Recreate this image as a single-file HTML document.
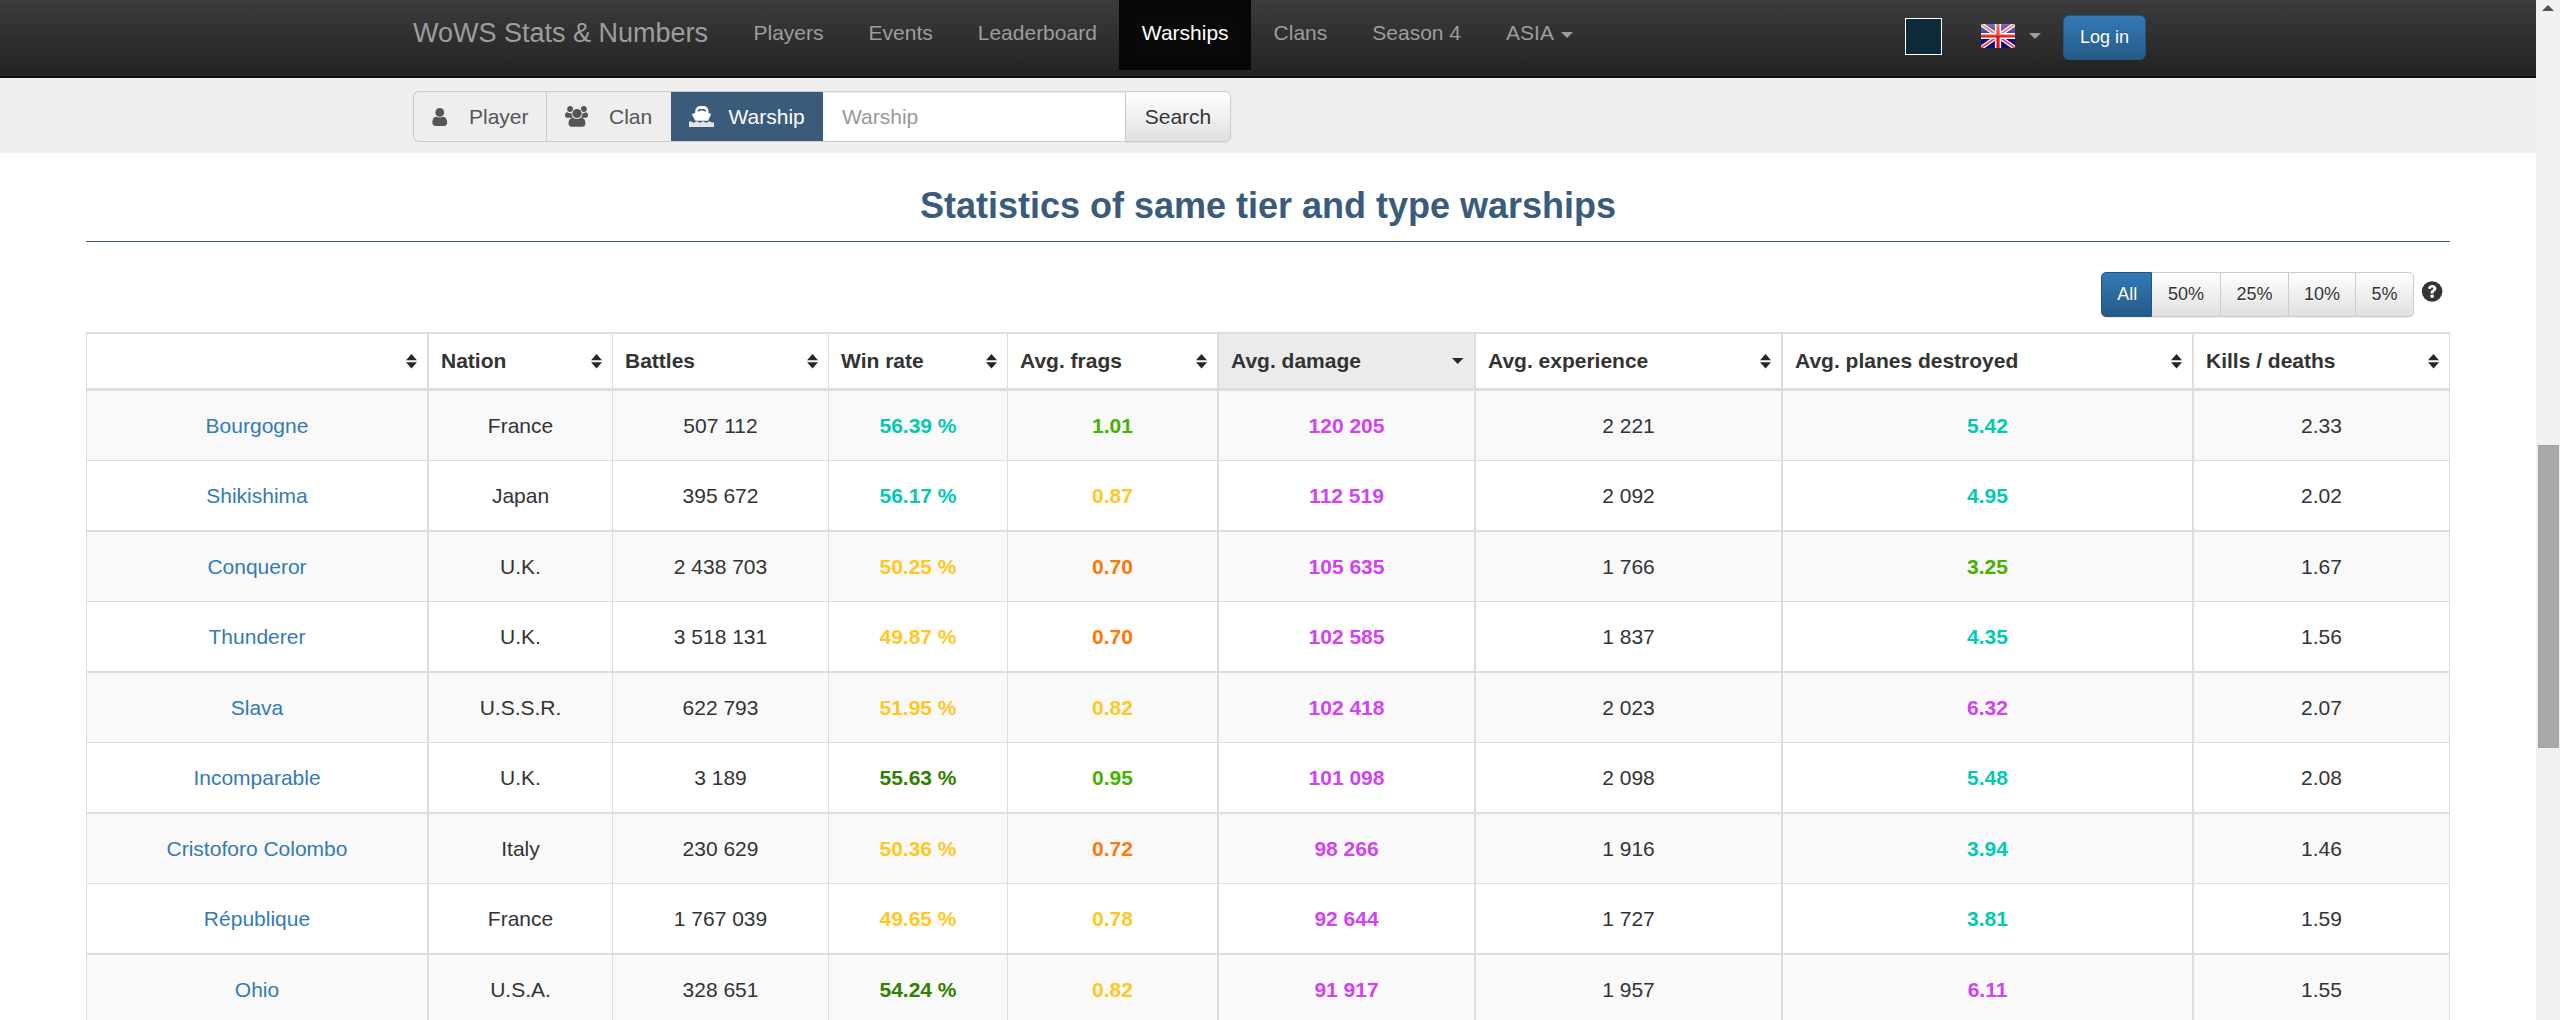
<!DOCTYPE html>
<html>
<head>
<meta charset="utf-8">
<title>WoWS Stats &amp; Numbers</title>
<style>
*{box-sizing:border-box;margin:0;padding:0}
html,body{width:2560px;height:1020px;overflow:hidden;background:#fff}
body{font-family:"Liberation Sans",sans-serif;font-size:21px;color:#333;position:relative}
a{color:#337ab7;text-decoration:none}
/* scrollbar */
.sb{position:absolute;left:2536px;top:0;width:24px;height:1020px;background:#f1f1f1}
.sb .thumb{position:absolute;left:2px;top:445px;width:21px;height:303px;background:#a8a8a8;border:1px solid #a2a2a2}
.sb .up{position:absolute;left:6px;top:5px;width:0;height:0;border-left:6px solid transparent;border-right:6px solid transparent;border-bottom:6px solid #505050}
/* navbar */
.nav{position:absolute;left:0;top:0;width:2536px;height:78px;background:linear-gradient(#3c3c3c 0,#222 76px,#121212 76px,#121212 77px);border-bottom:1px solid #080808}
.brand{position:absolute;left:413px;top:0;height:70px;line-height:66px;font-size:27px;color:#9d9d9d;white-space:nowrap}
.links{position:absolute;left:731px;top:0;height:70px;display:flex}
.links div{height:70px;line-height:66px;padding:0 22.5px;color:#9d9d9d;font-size:21px;white-space:nowrap}
.links div.act{background:#080808;color:#fff;box-shadow:inset 0 4px 12px rgba(0,0,0,.25)}
.caret{display:inline-block;width:0;height:0;border-left:6px solid transparent;border-right:6px solid transparent;border-top:6px solid #9d9d9d;vertical-align:middle;margin-left:7px;position:relative;top:.5px}
.swatch{position:absolute;left:1905px;top:18px;width:37px;height:37px;background:#0d2a38;border:1.5px solid #fff}
.flag{position:absolute;left:1981px;top:24px;width:34px;height:24px}
.caret2{position:absolute;left:2029px;top:33px;width:0;height:0;border-left:6px solid transparent;border-right:6px solid transparent;border-top:6px solid #9d9d9d}
.login{position:absolute;left:2063px;top:15px;width:83px;height:45px;border-radius:6px;background:linear-gradient(#337ab7 0,#265a88 100%);border:1.5px solid #245580;color:#fff;font-size:18px;line-height:42px;text-align:center;text-shadow:0 -1px 0 rgba(0,0,0,.2)}
/* search strip */
.strip{position:absolute;left:0;top:78px;width:2536px;height:75px;background:#f0efed}
.sg{position:absolute;left:413px;top:13px;height:51px;display:flex}
.sg .b{height:51px;border:1.5px solid #ccc;background:#eee;color:#555;font-size:21px;line-height:47px;white-space:nowrap;display:flex;align-items:center}
.sg .b svg{display:block}
.sg .b1{width:133px;border-radius:6px 0 0 6px;border-right:none}
.sg .b2{width:125px;border-right:none}
.sg .b3{width:152px;background:#3a5b7a;border-color:#ccc;border-width:1.5px 0;color:#fff}
.sg .inp{width:302px;height:51px;background:#fff;border-top:1.5px solid #ccc;border-bottom:1.5px solid #ccc;color:#999;font-size:21px;line-height:49px;padding-left:19px;box-shadow:inset 0 1px 1px rgba(0,0,0,.075)}
.sg .srch{width:106px;height:51px;border:1.5px solid #ccc;border-radius:0 6px 6px 0;background:linear-gradient(#fff 0,#e0e0e0 100%);color:#333;font-size:21px;line-height:49px;text-align:center;text-shadow:0 1px 0 #fff;box-shadow:inset 0 1px 0 rgba(255,255,255,.15),0 1px 1px rgba(0,0,0,.075)}
/* heading */
h3{position:absolute;left:86px;top:178px;width:2364px;height:64px;text-align:center;font-size:36px;font-weight:bold;color:#3a5b7c;line-height:55px;border-bottom:1.5px solid #3a5b7c;white-space:nowrap}
/* filter buttons */
.fg{position:absolute;left:2101px;top:272px;height:45px;display:flex;border-radius:5px;box-shadow:0 1px 1px rgba(0,0,0,.075)}
.fg div{height:45px;font-size:18px;line-height:42px;text-align:center;color:#333;border:1.5px solid #ccc;border-left:none;background:linear-gradient(#fff 0,#e0e0e0 100%);text-shadow:0 1px 0 #fff}
.fg div.on{background:linear-gradient(#337ab7 0,#265a88 100%);border:1.5px solid #245580;color:#fff;border-radius:5px 0 0 5px;text-shadow:0 -1px 0 rgba(0,0,0,.2)}
.fg div:last-child{border-radius:0 5px 5px 0}
.help{position:absolute;left:2421px;top:281px;width:22px;height:21px}
/* table */
.tbl{position:absolute;left:86px;top:332px;width:2364px;border-left:1px solid #ddd;border-top:2px solid #ddd}
.tr{display:flex;width:2363px}
.c{flex:none;border-right:1px solid #ddd;text-align:center;white-space:nowrap;overflow:hidden}
.c1{width:342px;border-right-width:2px}
.c2{width:184px}
.c3{width:216px}
.c4{width:179px}
.c5{width:211px;border-right-width:2px}
.c6{width:257px;border-right-width:2px}
.c7{width:307px;border-right-width:2px}
.c8{width:411px;border-right-width:2px}
.c9{width:256px}
.th .c{height:57px;border-bottom:3px solid #ddd;text-align:left;font-weight:bold;line-height:54px;padding-left:12px;position:relative;color:#333}
.th .sorted{background:#ebebeb}
.si{position:absolute;right:10px;top:20px;fill:#23282c;height:14.5px}
.si.sd{top:24px;right:10.5px;height:6px;width:11.5px}
.tr.b1 .c{height:70px;border-bottom:1px solid #ddd;line-height:69px}
.tr.b2 .c{height:71px;border-bottom:2px solid #ddd;line-height:69px}
.odd .c{background:#f9f9f9}
.kt{color:#02c9b3}.kg{color:#44b300}.kd{color:#318000}.ky{color:#ffc71f}.ko{color:#fe7903}.kp{color:#d042f3}
</style>
</head>
<body>
<div class="nav">
  <div class="brand">WoWS Stats &amp; Numbers</div>
  <div class="links">
    <div>Players</div><div>Events</div><div>Leaderboard</div><div class="act">Warships</div><div>Clans</div><div>Season 4</div><div>ASIA<span class="caret"></span></div>
  </div>
  <div class="swatch"></div>
  <svg class="flag" viewBox="0 0 34 24">
    <defs><filter id="fb" x="0" y="0" width="1" height="1"><feGaussianBlur stdDeviation="0.55"/></filter>
    <linearGradient id="gl" x1="0" y1="0" x2="0" y2="1"><stop offset="0" stop-color="#fff" stop-opacity=".42"/><stop offset=".5" stop-color="#fff" stop-opacity=".18"/><stop offset=".52" stop-color="#fff" stop-opacity="0"/><stop offset="1" stop-color="#fff" stop-opacity="0"/></linearGradient>
    <clipPath id="fc"><rect width="34" height="24"/></clipPath></defs>
    <g clip-path="url(#fc)"><g filter="url(#fb)">
    <rect x="-2" y="-2" width="38" height="28" fill="#0c0c7e"/>
    <path d="M0 0 L34 24 M34 0 L0 24" stroke="#fff" stroke-width="4"/>
    <path d="M0 0 L34 24 M34 0 L0 24" stroke="#ee3a44" stroke-width="1.7"/>
    <path d="M17 -2 V26 M-2 12 H36" stroke="#fff" stroke-width="6.2"/>
    <path d="M17 -2 V26 M-2 12 H36" stroke="#e01212" stroke-width="3.2"/>
    </g><rect width="34" height="24" fill="url(#gl)"/></g>
  </svg>
  <div class="caret2"></div>
  <div class="login">Log in</div>
</div>
<div class="strip">
  <div class="sg">
    <div class="b b1"><svg width="16" height="18" viewBox="0 0 16 18" style="margin-left:18.3px;margin-right:20.7px;position:relative;top:0.6px"><path d="M.3 14.5 C.3 11 2 9 4 8.7 H11.4 C13.5 9 15.2 11 15.2 14.5 C15.2 16.8 13.8 18 12 18 H3.5 C1.7 18 .3 16.8 .3 14.5Z" fill="#555"/><circle cx="7.75" cy="4.4" r="5.2" fill="#eee"/><circle cx="7.75" cy="4.4" r="4.4" fill="#555"/></svg>Player</div>
    <div class="b b2"><svg width="23" height="21" viewBox="0 0 23 21" style="margin-left:17.8px;margin-right:21.2px;position:relative;top:-0.5px"><g fill="#555"><circle cx="5.1" cy="2.95" r="3"/><circle cx="18.8" cy="2.95" r="3"/><path d="M0 9.6 C0 7.4 .9 6.3 2.3 6.3 C3.1 7 4.1 7.3 5.1 7.3 C6 7.3 6.8 7.1 7.6 6.6 L8.4 11.7 H2.2 C.9 11.7 0 11 0 9.6Z"/><path d="M23.9 9.6 C23.9 7.4 23 6.3 21.6 6.3 C20.8 7 19.8 7.3 18.8 7.3 C17.9 7.3 17.1 7.1 16.3 6.6 L15.5 11.7 H21.7 C23 11.7 23.9 11 23.9 9.6Z" transform="translate(-.9 0)"/><path d="M3.5 17.6 C3.5 14 5 12.3 7.2 12.1 H17 C19.2 12.3 20.4 14 20.4 17.6 C20.4 19.6 19.1 20.7 17.3 20.7 H6.6 C4.8 20.7 3.5 19.6 3.5 17.6Z"/></g><circle cx="12" cy="7.5" r="5.5" fill="#eee"/><circle cx="12" cy="7.5" r="4.6" fill="#555"/></svg>Clan</div>
    <div class="b b3"><svg width="25" height="21" viewBox="0 0 25 21" style="margin-left:18px;margin-right:14.5px"><g fill="#fff"><path fill-rule="evenodd" d="M10.2 0 H15.6 C17.8 .6 19.3 2.4 19.5 4.9 V6.9 L21.5 7.8 C21.9 8 22 8.4 21.8 8.9 L19.1 14.7 H6.25 L3.2 8.9 C3 8.4 3.1 8 3.5 7.8 L6.25 6.9 V4.9 C6.4 2.4 8 .6 10.2 0 Z M8.75 5.7 L12.8 4.3 L16.9 5.7 V4.6 C16.6 3.4 15.4 3 12.8 3 C10.2 3 9 3.4 8.75 4.6 Z"/><path opacity=".85" d="M0 15.9 q1.56 -1.5 3.125 0 t3.125 0 t3.125 0 t3.125 0 t3.125 0 t3.125 0 t3.125 0 t3.125 0 V21 H0 Z"/></g></svg>Warship</div>
    <div class="inp">Warship</div>
    <div class="srch">Search</div>
  </div>
</div>
<h3>Statistics of same tier and type warships</h3>
<div class="fg">
  <div class="on" style="width:51px;padding-left:1.5px">All</div><div style="width:69px">50%</div><div style="width:68px">25%</div><div style="width:67px">10%</div><div style="width:58px">5%</div>
</div>
<svg class="help" viewBox="0 0 22 21"><circle cx="11.1" cy="10.5" r="10.3" fill="#333"/><path transform="translate(0.6 0)" d="M6.4 7.6 C6.6 5.2 8.4 4 10.6 4 C13 4 14.8 5.4 14.8 7.5 C14.8 9.1 13.8 9.9 12.9 10.5 C12.2 11 12 11.3 12 12.1 V12.5 H9 V11.7 C9 10.3 9.7 9.6 10.5 9 C11.3 8.5 11.7 8.2 11.7 7.6 C11.7 7 11.2 6.6 10.5 6.6 C9.8 6.6 9.4 7.1 9.3 7.9 Z M8.9 13.7 H12.1 V16.8 H8.9 Z" fill="#fff"/></svg>
<div class="tbl">
<div class="tr th">
<div class="c c1"><span></span><svg class="si" width="11" height="14.5" viewBox="0 0 11 15" preserveAspectRatio="none"><path d="M5.5 0 L11 6.4 H0 Z M0 8.6 H11 L5.5 15 Z"/></svg></div>
<div class="c c2"><span>Nation</span><svg class="si" width="11" height="14.5" viewBox="0 0 11 15" preserveAspectRatio="none"><path d="M5.5 0 L11 6.4 H0 Z M0 8.6 H11 L5.5 15 Z"/></svg></div>
<div class="c c3"><span>Battles</span><svg class="si" width="11" height="14.5" viewBox="0 0 11 15" preserveAspectRatio="none"><path d="M5.5 0 L11 6.4 H0 Z M0 8.6 H11 L5.5 15 Z"/></svg></div>
<div class="c c4"><span>Win rate</span><svg class="si" width="11" height="14.5" viewBox="0 0 11 15" preserveAspectRatio="none"><path d="M5.5 0 L11 6.4 H0 Z M0 8.6 H11 L5.5 15 Z"/></svg></div>
<div class="c c5"><span>Avg. frags</span><svg class="si" width="11" height="14.5" viewBox="0 0 11 15" preserveAspectRatio="none"><path d="M5.5 0 L11 6.4 H0 Z M0 8.6 H11 L5.5 15 Z"/></svg></div>
<div class="c c6 sorted"><span>Avg. damage</span><svg class="si sd" width="11" height="7" viewBox="0 0 13 7" preserveAspectRatio="none"><path d="M0 0 H13 L6.5 7 Z"/></svg></div>
<div class="c c7"><span>Avg. experience</span><svg class="si" width="11" height="14.5" viewBox="0 0 11 15" preserveAspectRatio="none"><path d="M5.5 0 L11 6.4 H0 Z M0 8.6 H11 L5.5 15 Z"/></svg></div>
<div class="c c8"><span>Avg. planes destroyed</span><svg class="si" width="11" height="14.5" viewBox="0 0 11 15" preserveAspectRatio="none"><path d="M5.5 0 L11 6.4 H0 Z M0 8.6 H11 L5.5 15 Z"/></svg></div>
<div class="c c9"><span>Kills / deaths</span><svg class="si" width="11" height="14.5" viewBox="0 0 11 15" preserveAspectRatio="none"><path d="M5.5 0 L11 6.4 H0 Z M0 8.6 H11 L5.5 15 Z"/></svg></div>
</div>
<div class="tr r1 odd b1">
<div class="c c1"><a>Bourgogne</a></div>
<div class="c c2">France</div>
<div class="c c3">507 112</div>
<div class="c c4"><b class="kt">56.39 %</b></div>
<div class="c c5"><b class="kg">1.01</b></div>
<div class="c c6"><b class="kp">120 205</b></div>
<div class="c c7">2 221</div>
<div class="c c8"><b class="kt">5.42</b></div>
<div class="c c9">2.33</div>
</div>
<div class="tr r2 even b2">
<div class="c c1"><a>Shikishima</a></div>
<div class="c c2">Japan</div>
<div class="c c3">395 672</div>
<div class="c c4"><b class="kt">56.17 %</b></div>
<div class="c c5"><b class="ky">0.87</b></div>
<div class="c c6"><b class="kp">112 519</b></div>
<div class="c c7">2 092</div>
<div class="c c8"><b class="kt">4.95</b></div>
<div class="c c9">2.02</div>
</div>
<div class="tr r3 odd b1">
<div class="c c1"><a>Conqueror</a></div>
<div class="c c2">U.K.</div>
<div class="c c3">2 438 703</div>
<div class="c c4"><b class="ky">50.25 %</b></div>
<div class="c c5"><b class="ko">0.70</b></div>
<div class="c c6"><b class="kp">105 635</b></div>
<div class="c c7">1 766</div>
<div class="c c8"><b class="kg">3.25</b></div>
<div class="c c9">1.67</div>
</div>
<div class="tr r4 even b2">
<div class="c c1"><a>Thunderer</a></div>
<div class="c c2">U.K.</div>
<div class="c c3">3 518 131</div>
<div class="c c4"><b class="ky">49.87 %</b></div>
<div class="c c5"><b class="ko">0.70</b></div>
<div class="c c6"><b class="kp">102 585</b></div>
<div class="c c7">1 837</div>
<div class="c c8"><b class="kt">4.35</b></div>
<div class="c c9">1.56</div>
</div>
<div class="tr r5 odd b1">
<div class="c c1"><a>Slava</a></div>
<div class="c c2">U.S.S.R.</div>
<div class="c c3">622 793</div>
<div class="c c4"><b class="ky">51.95 %</b></div>
<div class="c c5"><b class="ky">0.82</b></div>
<div class="c c6"><b class="kp">102 418</b></div>
<div class="c c7">2 023</div>
<div class="c c8"><b class="kp">6.32</b></div>
<div class="c c9">2.07</div>
</div>
<div class="tr r6 even b2">
<div class="c c1"><a>Incomparable</a></div>
<div class="c c2">U.K.</div>
<div class="c c3">3 189</div>
<div class="c c4"><b class="kd">55.63 %</b></div>
<div class="c c5"><b class="kg">0.95</b></div>
<div class="c c6"><b class="kp">101 098</b></div>
<div class="c c7">2 098</div>
<div class="c c8"><b class="kt">5.48</b></div>
<div class="c c9">2.08</div>
</div>
<div class="tr r7 odd b1">
<div class="c c1"><a>Cristoforo Colombo</a></div>
<div class="c c2">Italy</div>
<div class="c c3">230 629</div>
<div class="c c4"><b class="ky">50.36 %</b></div>
<div class="c c5"><b class="ko">0.72</b></div>
<div class="c c6"><b class="kp">98 266</b></div>
<div class="c c7">1 916</div>
<div class="c c8"><b class="kt">3.94</b></div>
<div class="c c9">1.46</div>
</div>
<div class="tr r8 even b2">
<div class="c c1"><a>République</a></div>
<div class="c c2">France</div>
<div class="c c3">1 767 039</div>
<div class="c c4"><b class="ky">49.65 %</b></div>
<div class="c c5"><b class="ky">0.78</b></div>
<div class="c c6"><b class="kp">92 644</b></div>
<div class="c c7">1 727</div>
<div class="c c8"><b class="kt">3.81</b></div>
<div class="c c9">1.59</div>
</div>
<div class="tr r9 odd b1">
<div class="c c1"><a>Ohio</a></div>
<div class="c c2">U.S.A.</div>
<div class="c c3">328 651</div>
<div class="c c4"><b class="kd">54.24 %</b></div>
<div class="c c5"><b class="ky">0.82</b></div>
<div class="c c6"><b class="kp">91 917</b></div>
<div class="c c7">1 957</div>
<div class="c c8"><b class="kp">6.11</b></div>
<div class="c c9">1.55</div>
</div>
</div>
<div class="sb"><div class="up"></div><div class="thumb"></div></div>
</body>
</html>
